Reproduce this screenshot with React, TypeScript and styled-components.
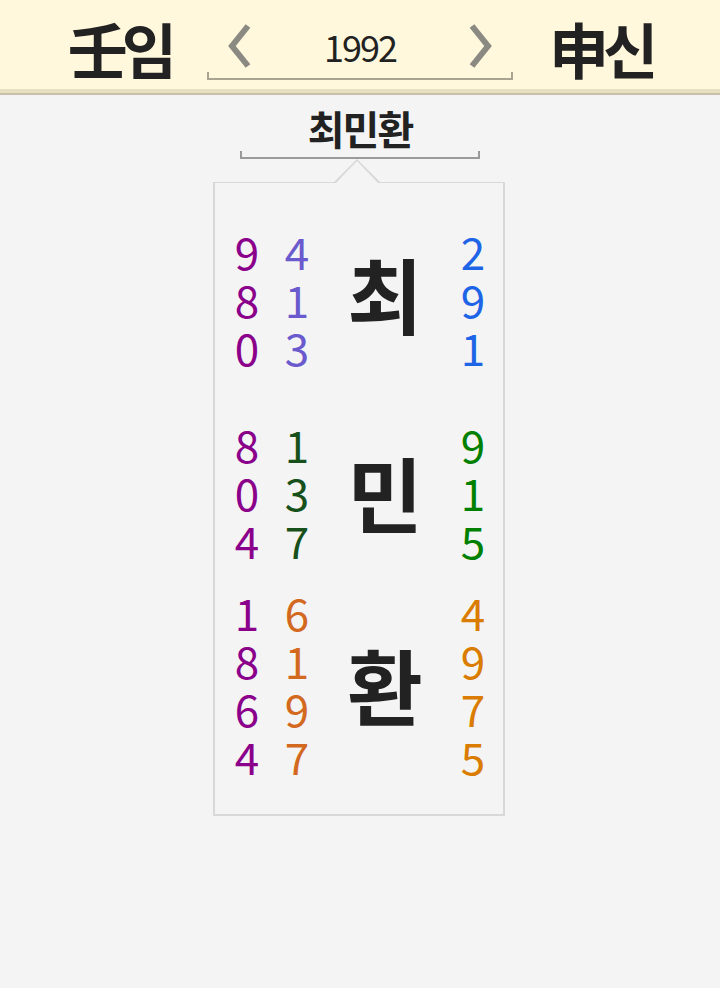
import React from 'react';
import styled, { createGlobalStyle } from 'styled-components';

const GlobalStyle = createGlobalStyle`
  html, body {
    margin: 0;
    padding: 0;
    background: #f4f4f4;
    font-family: "Noto Sans CJK KR", "Noto Sans", sans-serif;
  }
`;

type Line = { a: string; b: string; c: string };
type Block = {
  char: string;
  colA: string;
  colB: string;
  colC: string;
  top: number;
  lift: number;
  lines: Line[];
};

const blocks: Block[] = [
  {
    char: '최',
    colA: '#8b008b',
    colB: '#6a5acd',
    colC: '#1e64e6',
    top: 44,
    lift: 12,
    lines: [
      { a: '9', b: '4', c: '2' },
      { a: '8', b: '1', c: '9' },
      { a: '0', b: '3', c: '1' },
    ],
  },
  {
    char: '민',
    colA: '#8b008b',
    colB: '#17501a',
    colC: '#008000',
    top: 49,
    lift: 0,
    lines: [
      { a: '8', b: '1', c: '9' },
      { a: '0', b: '3', c: '1' },
      { a: '4', b: '7', c: '5' },
    ],
  },
  {
    char: '환',
    colA: '#8b008b',
    colB: '#d2691e',
    colC: '#d97c00',
    top: 24,
    lift: 0,
    lines: [
      { a: '1', b: '6', c: '4' },
      { a: '8', b: '1', c: '9' },
      { a: '6', b: '9', c: '7' },
      { a: '4', b: '7', c: '5' },
    ],
  },
];

const Chevron = ({ dir }: { dir: 'left' | 'right' }) => (
  <svg width="26" height="46" viewBox="0 0 26 46">
    <polyline
      points={dir === 'left' ? '21,3 5,23 21,43' : '5,3 21,23 5,43'}
      fill="none"
      stroke="#8a8a82"
      strokeWidth="6"
      strokeLinejoin="miter"
    />
  </svg>
);

const App = () => {
  return (
    <>
      <GlobalStyle />
      <Page>
        <Header>
          <Pillar>壬임</Pillar>
          <Nav>
            <NavRow>
              <Chevron dir="left" />
              <Year>1992</Year>
              <Chevron dir="right" />
            </NavRow>
            <Bracket $color="#a8a490" />
          </Nav>
          <Pillar>申신</Pillar>
        </Header>

        <NameArea>
          <Name>최민환</Name>
          <NameBracket $color="#9a9a9a" />
          <Card>
            {blocks.map((block) => (
              <Row key={block.char} $top={block.top}>
                <Col>
                  {block.lines.map((l, i) => (
                    <Digit key={i} $color={block.colA}>
                      {l.a}
                    </Digit>
                  ))}
                </Col>
                <Col>
                  {block.lines.map((l, i) => (
                    <Digit key={i} $color={block.colB}>
                      {l.b}
                    </Digit>
                  ))}
                </Col>
                <BigChar $lift={block.lift}>{block.char}</BigChar>
                <Col>
                  {block.lines.map((l, i) => (
                    <Digit key={i} $color={block.colC}>
                      {l.c}
                    </Digit>
                  ))}
                </Col>
              </Row>
            ))}
          </Card>
        </NameArea>
      </Page>
    </>
  );
};

const Page = styled.div`
  width: 720px;
  min-height: 988px;
  background: #f4f4f4;
`;

const Header = styled.header`
  height: 89px;
  background: #fff8dc;
  border-bottom: 4px solid #e6dfc0;
  box-shadow: 0 2px 0 #c8c0a8;
  display: flex;
  align-items: center;
  justify-content: center;
  gap: 36px;
`;

const Pillar = styled.div`
  font-size: 60px;
  font-weight: 700;
  color: #222;
  line-height: 1;
  letter-spacing: -6px;
  margin-top: 6px;
`;

const Nav = styled.div`
  width: 306px;
  display: flex;
  flex-direction: column;
  margin-top: 14px;
`;

const NavRow = styled.div`
  display: flex;
  align-items: center;
  justify-content: space-between;
  padding: 0 20px;
`;

const Year = styled.div`
  font-size: 36px;
  color: #222;
  line-height: 1;
  letter-spacing: -2px;
`;

const Bracket = styled.div<{ $color: string }>`
  height: 6px;
  margin-top: 3px;
  border: 2px solid ${(p) => p.$color};
  border-top: none;
`;

const NameArea = styled.div`
  display: flex;
  flex-direction: column;
  align-items: center;
  padding-top: 10px;
`;

const Name = styled.div`
  font-size: 40px;
  font-weight: 700;
  color: #222;
  line-height: 50px;
  letter-spacing: -2px;
`;

const NameBracket = styled(Bracket)`
  width: 236px;
  margin-top: -2px;
`;

const Card = styled.div`
  position: relative;
  width: 288px;
  height: 631px;
  margin-top: 23px;
  margin-left: -2px;
  border: 2px solid #d8d8d8;
  border-top-width: 1px;
  background: #f4f4f4;
  box-sizing: content-box;

  &::before {
    content: '';
    position: absolute;
    top: -24px;
    left: 118px;
    width: 0;
    height: 0;
    border-left: 24px solid transparent;
    border-right: 24px solid transparent;
    border-bottom: 24px solid #d8d8d8;
  }

  &::after {
    content: '';
    position: absolute;
    top: -22px;
    left: 120px;
    width: 0;
    height: 0;
    border-left: 22px solid transparent;
    border-right: 22px solid transparent;
    border-bottom: 23px solid #f4f4f4;
  }
`;

const Row = styled.div<{ $top: number }>`
  display: grid;
  grid-template-columns: 40px 40px 1fr 40px;
  column-gap: 10px;
  align-items: center;
  padding: 0 10px 0 12px;
  margin-top: ${(p) => p.$top}px;
`;

const Col = styled.div`
  display: flex;
  flex-direction: column;
  align-items: center;
`;

const Digit = styled.div<{ $color: string }>`
  font-size: 44px;
  line-height: 48px;
  color: ${(p) => p.$color};
`;

const BigChar = styled.div<{ $lift: number }>`
  font-size: 82px;
  font-weight: 700;
  color: #222;
  line-height: 1;
  text-align: center;
  margin-bottom: ${(p) => p.$lift}px;
`;

export default App;
